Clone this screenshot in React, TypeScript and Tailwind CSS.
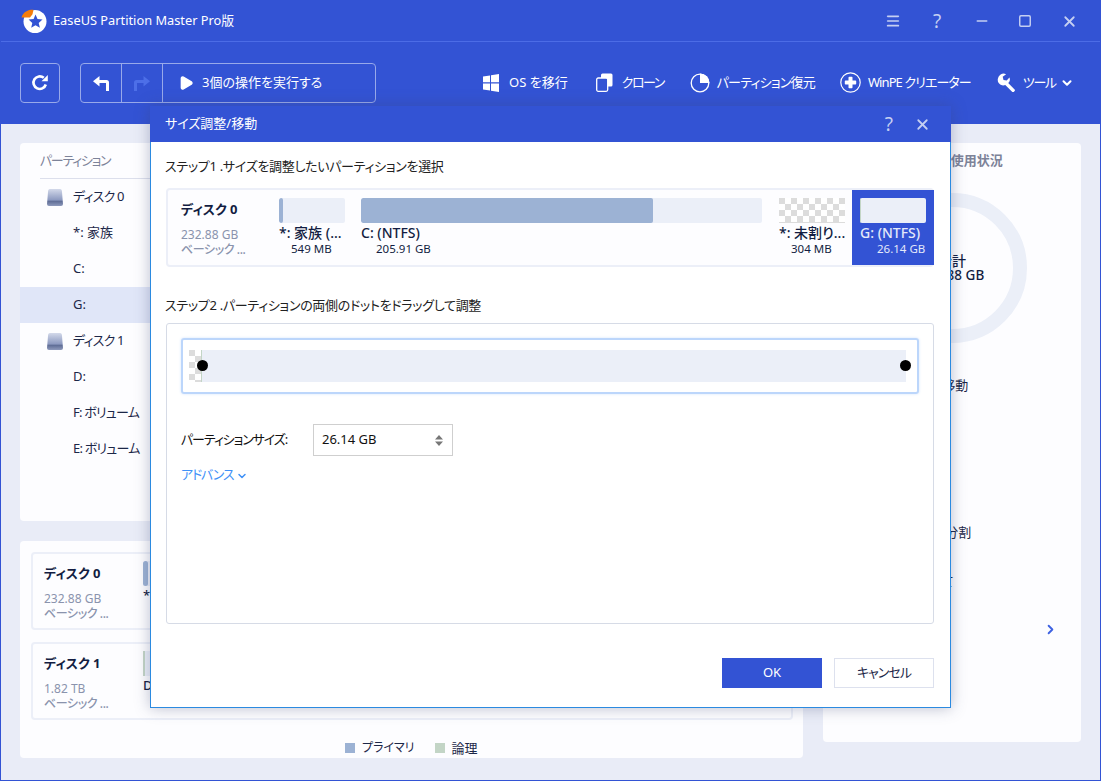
import React from 'react'
import { ChevronDown, ChevronRight, Menu, Minus, Play, Square, X } from 'lucide-react'

const FONT = "font-['Noto_Sans','Noto_Sans_CJK_JP',sans-serif] [font-feature-settings:'palt']"
const CHECKER = 'bg-[conic-gradient(#ffffff_25%,#dcdcdc_0_50%,#ffffff_0_75%,#dcdcdc_0)] bg-size-[12px_12px]'

function DiskIcon() {
  return (
    <svg width="16" height="17" viewBox="0 0 16 17" className="shrink-0">
      <defs>
        <linearGradient id="hd" x1="0" y1="0" x2="0" y2="1">
          <stop offset="0" stopColor="#d3d9ea" />
          <stop offset="0.65" stopColor="#8c99c0" />
          <stop offset="0.72" stopColor="#5f6d96" />
          <stop offset="1" stopColor="#8e9abc" />
        </linearGradient>
      </defs>
      <path d="M3 0h10q2 0 2 3l1 12q0 2-2 2H2q-2 0-2-2L1 3q0-3 2-3z" fill="url(#hd)" />
    </svg>
  )
}

function Logo() {
  return (
    <svg width="26" height="24" viewBox="0 0 26 24" className="shrink-0">
      <circle cx="14" cy="12.500" r="11.500" fill="#fff" />
      <path d="M14.500 5.500l2 4.600 5 .5-3.800 3.300 1.200 4.900-4.400-2.600-4.300 2.600 1.100-4.900-3.700-3.300 5-.5z" fill="#3353d4" />
      <path d="M0.500 8.500C1.500 4.500 5 1.500 10 .8l2.500 0-1 4.500-2.500 3.200z" fill="#f57c0a" />
    </svg>
  )
}

function ToolItem({ icon, label, className }: { icon: React.ReactNode; label: string; className: string }) {
  return (
    <div className={`flex shrink-0 items-center text-[13px] whitespace-nowrap text-white ${className}`}>
      {icon}
      <span>{label}</span>
    </div>
  )
}

function TitleBar() {
  return (
    <div className="flex h-[41px] items-center border-b border-[#4c6ce6] pl-5 text-[13px] text-white">
      <Logo />
      <span className="ml-[6px] text-[12.8px]">EaseUS Partition Master Pro版</span>
      <div className="ml-auto flex items-center text-[#c5cff2]">
        <Menu size={16} strokeWidth={2.500} className="mr-[28px]" />
        <span className="mr-[29px] w-[16px] text-center text-[19px] leading-none">?</span>
        <Minus size={16} strokeWidth={2.500} className="mr-7" />
        <Square size={14} strokeWidth={2.500} className="mr-[29px]" />
        <X size={17} strokeWidth={2.500} className="mr-[22px]" />
      </div>
    </div>
  )
}

function Toolbar() {
  return (
    <div className="flex h-[82px] items-center pl-[19px] pb-[1px]">
      <div className="flex h-10 w-10 shrink-0 items-center justify-center rounded-sm border border-[#98a9ea]">
        <svg width="18" height="18" viewBox="0 0 18 18" fill="none" stroke="#fff" strokeWidth="2.600">
          <path d="M14.800 10.500A6.300 6.300 0 1 1 12.800 3.800" />
          <path d="M10.500 7.200h6.300V1z" fill="#fff" stroke="none" />
        </svg>
      </div>
      <div className="ml-5 flex h-10 w-[296px] shrink-0 items-center rounded-sm border border-[#98a9ea]">
        <div className="flex h-full w-[41px] items-center justify-center border-r border-[#98a9ea]">
          <svg width="18" height="16" viewBox="0 0 18 16" fill="none">
            <path d="M7.500 1L1 6.200l6.500 5.200V8H14v8h3V7.500q0-2.500-2.500-2.500h-7z" fill="#fff" />
          </svg>
        </div>
        <div className="flex h-full w-[41px] items-center justify-center border-r border-[#98a9ea]">
          <svg width="18" height="16" viewBox="0 0 18 16" fill="none">
            <path d="M10.500 1L17 6.200l-6.500 5.200V8H4v8H1V7.500Q1 5 3.500 5h7z" fill="#4d6fe8" />
          </svg>
        </div>
        <Play size={16} fill="#fff" stroke="#fff" className="ml-[15px] shrink-0" />
        <span className="ml-2 text-[13px] whitespace-nowrap text-white">3個の操作を実行する</span>
      </div>
      <ToolItem
        className="ml-[107px]"
        label="OS を移行"
        icon={
          <svg width="16" height="18" viewBox="0 0 16 18" className="mr-[10px]" fill="#fff">
            <path d="M0 2.500L7 1.500V8.300H0zM8 1.300L16 0V8.300H8zM0 9.500H7V16.500L0 15.500zM8 9.500H16V18L8 16.700z" />
          </svg>
        }
      />
      <ToolItem
        className="ml-[28px] tracking-[-1.500px]"
        label="クローン"
        icon={
          <svg width="17" height="19" viewBox="0 0 17 19" className="mr-[9px]">
            <rect x="5" y="0.500" width="11.500" height="13" rx="1.500" fill="#fff" />
            <rect x="0.700" y="5" width="11" height="13.300" rx="1.500" fill="#3353d4" stroke="#fff" strokeWidth="1.300" />
          </svg>
        }
      />
      <ToolItem
        className="ml-[26px] tracking-[-0.800px]"
        label="パーティション復元"
        icon={
          <svg width="20" height="20" viewBox="0 0 20 20" className="mr-[7px]">
            <circle cx="10" cy="10" r="8.800" fill="none" stroke="#fff" strokeWidth="1.300" />
            <path d="M10 0.500A9.500 9.500 0 0 1 19.500 10H10z" fill="#fff" />
          </svg>
        }
      />
      <ToolItem
        className="ml-[25px] tracking-[-0.900px]"
        label="WinPE クリエーター"
        icon={
          <svg width="21" height="21" viewBox="0 0 21 21" className="mr-[7px]">
            <circle cx="10.500" cy="10.500" r="9.700" fill="none" stroke="#fff" strokeWidth="1.200" />
            <path d="M8.500 5.500q0-.7.700-.7h2.600q.7 0 .7.700v3h3q.7 0 .7.700v2.600q0 .7-.7.700h-3v3q0 .7-.7.700H9.200q-.7 0-.7-.7v-3h-3q-.7 0-.7-.7V9.200q0-.7.700-.7h3z" fill="#fff" />
          </svg>
        }
      />
      <ToolItem
        className="ml-[26px] tracking-[-1.300px]"
        label="ツール"
        icon={
          <svg width="19" height="19" viewBox="0 0 19 19" className="mr-[7px]" fill="#fff">
            <path d="M6.200 0.500q1.600 0 2.900.7L5.700 3.800l.8 3.200 3.200.6 2.700-3.200q.7 1.400.4 3-.4 1.700-1.600 2.700l6.400 6.300q.7.700 0 1.700l-.6.6q-1 .8-1.900 0L8.300 12q-1.600.7-3.300.3-2-.5-3.300-2.200Q.5 8.300.8 6 1.200 3.800 3 2.100 4.400.5 6.200.5z" />
          </svg>
        }
      />
      <ChevronDown size={14} strokeWidth={3.500} color="#fff" className="ml-[4px] shrink-0" />
    </div>
  )
}

function TreeRow({ label, disk, selected, tight }: { label: string; disk?: boolean; selected?: boolean; tight?: boolean }) {
  return (
    <div className={`flex h-9 items-center text-[13px] whitespace-nowrap text-[#1c2748] ${selected ? 'bg-[#e0e6f8]' : ''} ${tight ? 'tracking-[-0.800px]' : ''}`}>
      <div className="flex w-[53px] shrink-0 justify-end pr-[10px]">{disk && <DiskIcon />}</div>
      <span>{label}</span>
    </div>
  )
}

function PartitionList() {
  return (
    <div className="h-[378px] shrink-0 rounded-sm bg-[#fdfdff]">
      <div className="ml-5 flex h-[36px] items-center border-b border-[#dcdfec] text-[13px] tracking-[-1.300px] text-[#7d8399]">パーティション</div>
      <TreeRow label="ディスク 0" disk tight />
      <TreeRow label="*: 家族" />
      <TreeRow label="C:" />
      <TreeRow label="G:" selected />
      <TreeRow label="ディスク 1" disk tight />
      <TreeRow label="D:" />
      <TreeRow label="F: ボリューム" tight />
      <TreeRow label="E: ボリューム" tight />
    </div>
  )
}

function DiskCard({ name, size, kind, children }: { name: string; size: string; kind: string; children: React.ReactNode }) {
  return (
    <div className="flex h-[78px] rounded-[4px] border-2 border-[#eceff8]">
      <div className="w-[110px] shrink-0 pl-[11px] pt-[9px]">
        <div className="text-[13px] leading-[20px] font-bold text-[#131d42]">{name}</div>
        <div className="mt-[8px] text-[12px] leading-[15px] text-[#8a93ad]">{size}</div>
        <div className="text-[12px] leading-[15px] font-medium tracking-[-0.400px] whitespace-nowrap text-[#8a93ad]">{kind}</div>
      </div>
      {children}
    </div>
  )
}

function Lower() {
  return (
    <div className="mt-5 flex flex-1 flex-col rounded-sm bg-[#fdfdff] pt-[11px] pr-[10px] pl-[11px]">
      <div className="flex flex-col gap-3">
        <DiskCard name="ディスク 0" size="232.88 GB" kind="ベーシック ...">
          <div className="pt-[7px]">
            <div className="h-[25px] w-[66px] rounded-sm bg-[#ebeff8]">
              <div className="h-full w-[5px] rounded-sm bg-[#9cb2d4]" />
            </div>
            <div className="text-[13px] font-medium text-[#131d42]">*: 家族</div>
          </div>
        </DiskCard>
        <DiskCard name="ディスク 1" size="1.82 TB" kind="ベーシック ...">
          <div className="pt-[7px]">
            <div className="h-[25px] w-[66px] bg-[#ebeff8]">
              <div className="h-full w-[2px] bg-[#c3d5c6]" />
            </div>
            <div className="text-[13px] font-medium text-[#131d42]">D:</div>
          </div>
        </DiskCard>
      </div>
      <div className="mt-[18px] flex pl-[314px] text-[12px] leading-5 text-[#1c2748]">
        <div className="flex items-center">
          <span className="mr-[7px] h-[10px] w-[10px] bg-[#9cb2d4]" />
          プライマリ
        </div>
        <div className="ml-[20px] flex items-center">
          <span className="mr-[7px] h-[10px] w-[10px] bg-[#c3d5c6]" />
          <span className="text-[13px]">論理</span>
        </div>
      </div>
    </div>
  )
}

function RightPanel() {
  return (
    <div className="ml-5 flex w-[258px] shrink-0 flex-col rounded-sm bg-[#fdfdff]">
      <div className="mt-[7px] pl-[82px] text-[13px] leading-5 font-bold whitespace-nowrap text-[#7d8399]">ディスク使用状況</div>
      <div className="mt-[23px] ml-[54px] flex h-[150px] w-[150px] flex-col items-center justify-center rounded-full border-[14px] border-[#ebeff8] text-[#131d42]">
        <div className="text-[14px] leading-[15px] font-medium">合計</div>
        <div className="text-[13.500px] leading-[15px] font-medium">232.88 GB</div>
      </div>
      <div className="mt-[32px] ml-[45px] flex flex-col text-[13px] whitespace-nowrap text-[#1c2748]">
        <div className="ml-2 h-[20px] leading-5">サイズ調整/移動</div>
        <div className="mt-[127px] -ml-[2px] h-[20px] leading-5">パーティション分割</div>
        <div className="mt-[29px] ml-[11px] h-[20px] leading-5">詳細について</div>
      </div>
      <ChevronRight size={15} strokeWidth={3} color="#3e62e2" className="mt-[31px] ml-[220px]" />
    </div>
  )
}

function Partition({ width, fill, label, size, sizeClass, selected }: { width: string; fill: string; label: string; size: string; sizeClass: string; selected?: boolean }) {
  return (
    <div className={`shrink-0 ${width}`}>
      <div className="h-[25px] w-full overflow-hidden rounded-[2px] bg-[#ebeff8]">
        <div className={`h-full ${fill} rounded-[2px]`} />
      </div>
      <div className={`mt-[1px] text-[14px] leading-[17px] font-medium whitespace-nowrap ${selected ? 'text-[#e4e9fa]' : 'text-[#131d42]'}`}>{label}</div>
      <div className={`text-[11.500px] leading-[16px] whitespace-nowrap ${sizeClass} ${selected ? 'text-[#e4e9fa]' : 'text-[#131d42]'}`}>{size}</div>
    </div>
  )
}

function Spinner() {
  return (
    <svg width="8" height="11" viewBox="0 0 8 11" fill="#777">
      <path d="M4 0L8 4.500H0zM0 6.500H8L4 11z" />
    </svg>
  )
}

function Dialog() {
  return (
    <div className="absolute top-[105px] left-[149px] flex h-[602px] w-[801px] flex-col border border-[#2b8ae0] bg-white shadow-[0_0_14px_rgba(60,70,110,0.35)]">
      <div className="-mx-px -mt-px flex h-[36px] shrink-0 items-center bg-[#3353d4] pl-[15px] text-[13px] text-white">
        <span>サイズ調整/移動</span>
        <div className="ml-auto flex items-center text-[#c5cff2]">
          <span className="text-[19px] leading-none">?</span>
          <X size={17} strokeWidth={2.500} className="mr-[20px] ml-[21px]" />
        </div>
      </div>
      <div className="pr-[16px] pl-[15px]">
        <div className="mt-[14px] -ml-px text-[13px] leading-5 tracking-[-0.300px] text-[#222]">ステップ1 .サイズを調整したいパーティションを選択</div>
        <div className="mt-[12px] flex h-[79px] rounded-[4px] border-2 border-[#eceff8] bg-[#fdfdff]">
          <div className="w-[111px] shrink-0 pl-[13px] pt-[9px]">
            <div className="text-[13px] leading-[20px] font-bold text-[#131d42]">ディスク 0</div>
            <div className="mt-[8px] text-[12px] leading-[15px] text-[#8a93ad]">232.88 GB</div>
            <div className="text-[12px] leading-[15px] font-medium tracking-[-0.400px] whitespace-nowrap text-[#8a93ad]">ベーシック ...</div>
          </div>
          <div className="flex flex-1 pt-[8px]">
            <Partition width="w-[66px]" fill="w-[4px] bg-[#9cb2d4]" label="*: 家族 (..." size="549 MB" sizeClass="pl-3" />
            <div className="ml-4 shrink-0">
              <Partition width="w-[401px]" fill="w-[292px] bg-[#9cb2d4]" label="C: (NTFS)" size="205.91 GB" sizeClass="pl-[15px]" />
            </div>
            <div className="ml-[17px] w-[66px] shrink-0">
              <div className={`h-[25px] border-b border-[#dcdcdc] ${CHECKER}`} />
              <div className="mt-[1px] text-[14px] leading-[17px] font-medium whitespace-nowrap text-[#131d42]">*: 未割り...</div>
              <div className="pl-3 text-[11.500px] leading-[16px] text-[#131d42]">304 MB</div>
            </div>
            <div className="ml-[7px] -mt-[8px] w-[82px] shrink-0 bg-[#3353d4] px-2 pt-2">
              <Partition width="w-[66px]" fill="w-[1px] bg-[#c3d5c6]" label="G: (NTFS)" size="26.14 GB" sizeClass="pl-[17px]" selected />
            </div>
          </div>
        </div>
        <div className="mt-[28px] -ml-px text-[13px] leading-5 tracking-[-0.300px] text-[#222]">ステップ2 .パーティションの両側のドットをドラッグして調整</div>
        <div className="mt-[8px] h-[301px] rounded-[3px] border border-[#d6dbe6] px-[14px] pt-[14px]">
          <div className="relative h-[56px] rounded-[3px] border-2 border-[#bcd6fb] pt-[10px] pr-[11px] pl-[6px] shadow-[0_0_3px_#d5e4fb]">
            <div className="flex h-[32px] bg-[#ebeff8]">
              <div className={`h-full w-[13px] border-r border-[#c3d5c6] ${CHECKER}`} />
            </div>
            <span className="absolute top-[20px] left-[14px] h-[11px] w-[11px] rounded-full bg-black" />
            <span className="absolute top-[20px] right-[6px] h-[11px] w-[11px] rounded-full bg-black" />
          </div>
          <div className="mt-[30px] flex items-center text-[13px] whitespace-nowrap text-[#111]">
            <span className="w-[132px] tracking-[-1.100px]">パーティションサイズ:</span>
            <div className="flex h-[32px] w-[140px] items-center justify-between border border-[#cfcfcf] pr-[9px] pl-2 text-[13px]">
              <span>26.14 GB</span>
              <Spinner />
            </div>
          </div>
          <div className="mt-[9px] flex items-center text-[13px] tracking-[-1.200px] text-[#3f91f7]">
            アドバンス
            <ChevronDown size={12} strokeWidth={3} className="mt-[2px] ml-[3px]" />
          </div>
        </div>
        <div className="mt-[34px] flex justify-end gap-3">
          <button className="h-[30px] w-[100px] bg-[#3353d4] text-[13px] text-white">OK</button>
          <button className="h-[30px] w-[100px] border border-[#dde1ee] bg-white text-[13px] tracking-[-1px] text-[#1c2748]">キャンセル</button>
        </div>
      </div>
    </div>
  )
}

export default function App() {
  return (
    <div className={`relative h-[781px] w-[1101px] overflow-hidden border border-[#3353d4] bg-[#e9ecf7] ${FONT}`}>
      <div className="bg-[#3353d4]">
        <TitleBar />
        <Toolbar />
      </div>
      <div className="flex h-[637px] px-[19px] pt-[19px] pb-[19px]">
        <div className="flex w-[783px] shrink-0 flex-col">
          <PartitionList />
          <Lower />
        </div>
        <RightPanel />
      </div>
      <Dialog />
    </div>
  )
}
